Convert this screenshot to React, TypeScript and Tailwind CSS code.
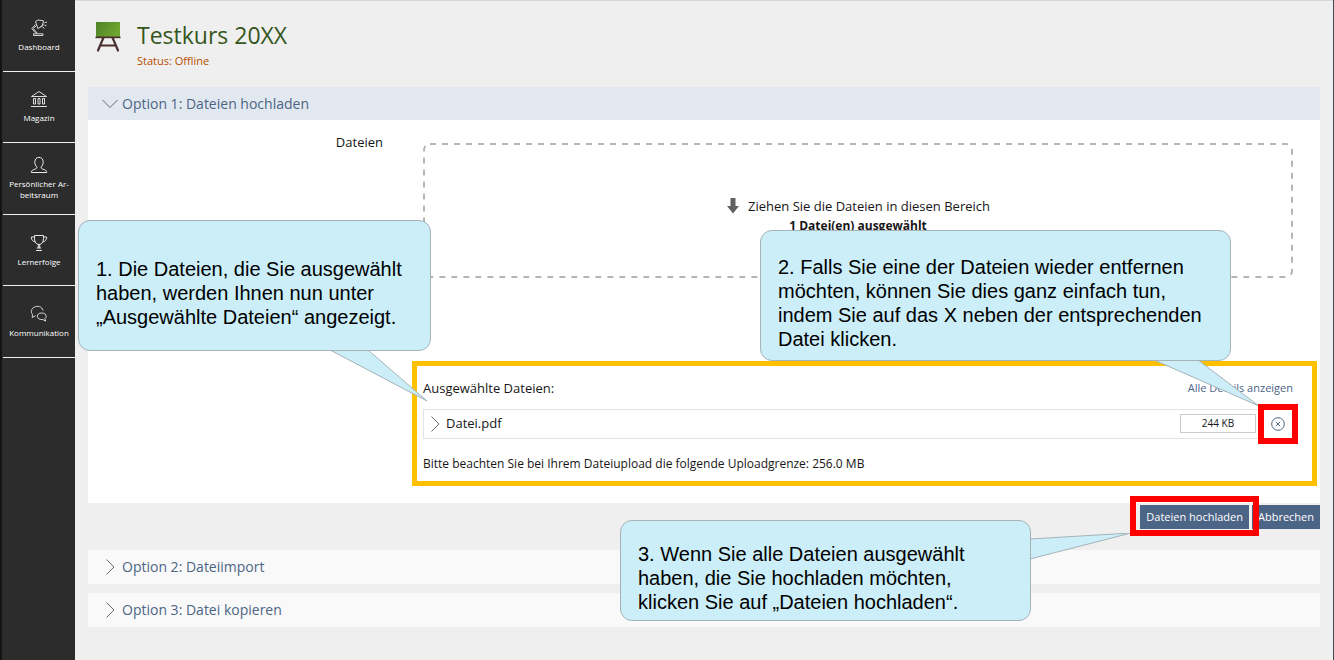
import type { ReactNode } from "react";

function LampIcon() {
  return (
    <svg viewBox="0 0 18 18" className="size-[18px]" fill="none" stroke="#e8e8e8" strokeWidth="0.9">
      <path d="M3.500 16.500h9.500v-1.700H3.500z" />
      <path d="M6 14.500 1.800 9.500 5.500 5.500M7.500 14.500 3.300 9.500 6.500 6.500" />
      <path d="M5.500 2.500 8 1l5.500.8-1 4.500-4.500 3.400z" />
      <path d="M12.800 4.800c.8 1.600-.3 3.200-2.400 3M14.500 3.800l2.500-.8M14.500 6l2 .8M13 8l1.200 1.700" />
    </svg>
  );
}

function MagazineIcon() {
  return (
    <svg viewBox="0 0 18 18" className="size-[18px]" fill="none" stroke="#f2f2f2" strokeWidth="0.9">
      <path d="M1.500 6.500 9 1.500l7.500 5zM1 16.500h16" />
      <path d="M3.500 8.500h2v5.500h-2zM8 8.500h2v5.500H8zM12.500 8.500h2v5.500h-2z" />
    </svg>
  );
}

function PersonIcon() {
  return (
    <svg viewBox="0 0 18 18" className="size-[18px]" fill="none" stroke="#e8e8e8" strokeWidth="1">
      <path d="M7 11c-1.300-1-2.200-2.800-2.200-5C4.800 3.200 6.500 1.300 9 1.300s4.200 1.900 4.200 4.700c0 2.200-.9 4-2.200 5 0 1.200.6 1.700 2 2.200 2.500.8 3.700 1.300 3.700 3.300H1.300c0-2 1.200-2.500 3.700-3.300 1.400-.5 2-1 2-2.200z" />
    </svg>
  );
}

function TrophyIcon() {
  return (
    <svg viewBox="0 0 18 18" className="size-[18px]" fill="none" stroke="#e8e8e8" strokeWidth="1">
      <path d="M4.500 1.500h9v3.200c0 3.300-1.800 5.800-4.500 5.800S4.500 8 4.500 4.700z" />
      <path d="M4.500 3H1.300c0 2.700 1.400 4.500 3.900 5M13.500 3h3.200c0 2.700-1.400 4.500-3.900 5" />
      <path d="M8.300 10.500v3.500M9.700 10.500v3.500M6.800 14h4.400M6 16.500h6" />
    </svg>
  );
}

function ChatIcon() {
  return (
    <svg viewBox="0 0 18 18" className="size-[18px]" fill="none" stroke="#e8e8e8" strokeWidth="0.9">
      <path d="M5.500 10.800 2.200 12.500l.3-3C.6 7.300 1 4 4 2.300c3.500-2 8.200-.8 9 3.200" />
      <path d="M11.700 8c2.700 0 4.500 1.300 4.500 3.200 0 1-.5 1.900-1.400 2.500l1 2.500-3-1.700c-3 .4-5.500-1-5.500-3.300C7.300 9.300 9 8 11.700 8z" />
    </svg>
  );
}

const navItems: { label: ReactNode; icon: ReactNode }[] = [
  { label: "Dashboard", icon: <LampIcon /> },
  { label: "Magazin", icon: <MagazineIcon /> },
  { label: <>Persönlicher Ar-<br />beitsraum</>, icon: <PersonIcon /> },
  { label: "Lernerfolge", icon: <TrophyIcon /> },
  { label: "Kommunikation", icon: <ChatIcon /> },
];

function Sidebar() {
  return (
    <nav className="w-[75px] shrink-0 border-l-2 border-[#141414] bg-[#2c2c2c] pl-px">
      <ul className="grid h-[358px] grid-rows-5">
        {navItems.map((item, i) => (
          <li key={i} className="border-b border-[#f0f0f0]">
            <a href="#" className="flex h-full flex-col items-center justify-center gap-1 text-center text-[8px] leading-[11px] whitespace-nowrap text-white">
              {item.icon}
              <span>{item.label}</span>
            </a>
          </li>
        ))}
      </ul>
    </nav>
  );
}

function BoardIcon() {
  return (
    <svg viewBox="0 0 26 30" className="h-[30px] w-[26px]">
      <defs>
        <linearGradient id="board" x1="0" y1="0" x2="1" y2="0.4">
          <stop offset="0" stopColor="#4f8128" />
          <stop offset="1" stopColor="#6ea62f" />
        </linearGradient>
      </defs>
      <path d="M8.500 15.500 3 28.500M17.500 15.500 23 28.500M6 23.500h14" stroke="#4a2f2c" strokeWidth="2.200" strokeLinecap="round" fill="none" />
      <path d="M1 0h24v15H1z" fill="url(#board)" />
      <path d="M0.500 14.500h25v1.700h-25z" fill="#4a2f2c" />
    </svg>
  );
}

function Chevron({ open = false }: { open?: boolean }) {
  return (
    <svg viewBox="0 0 16 16" className="size-4 shrink-0" fill="none" stroke="#6b6b6b" strokeWidth="1">
      <path d={open ? "M0.500 4 8 11.500 15.500 4" : "M4.500 .5 12 8 4.500 15.500"} />
    </svg>
  );
}

function OptionHeader({ label, open = false }: { label: string; open?: boolean }) {
  return (
    <button
      type="button"
      aria-expanded={open}
      className={
        open
          ? "flex h-[33px] w-full items-center gap-1 bg-[#e2e8ef] pl-[14px] text-sm text-[#4c6586]"
          : "flex h-[34px] w-full items-center gap-1 bg-[#f9f9f9] pl-[14px] text-sm text-[#4c6586]"
      }
    >
      <Chevron open={open} />
      {label}
    </button>
  );
}

function Bubble({ className, children }: { className: string; children: ReactNode }) {
  return (
    <div
      className={
        "absolute rounded-xl border border-[#a5b3b8] bg-[#cbeef8] px-[17px] font-['Liberation_Sans',Arial,sans-serif] text-xl leading-6 whitespace-nowrap text-black " +
        className
      }
    >
      {children}
    </div>
  );
}

function Tail({ className, viewBox, d }: { className: string; viewBox: string; d: string }) {
  return (
    <svg aria-hidden="true" viewBox={viewBox} className={"absolute " + className} fill="#cbeef8" stroke="#a5b3b8" strokeWidth="1">
      <path d={d} />
    </svg>
  );
}

function DropZone() {
  return (
    <div className="relative mr-[27px] ml-[11px] flex h-[135px] flex-col items-center pt-[53px] text-[13px] leading-5">
      <svg aria-hidden="true" className="absolute inset-px h-[calc(100%-2px)] w-[calc(100%-2px)] overflow-visible">
        <rect width="100%" height="100%" rx="6" fill="none" stroke="#b5b5b5" strokeWidth="2" strokeDasharray="6 6" />
      </svg>
      <div className="flex items-center gap-2">
        <svg viewBox="0 0 14 16" className="h-4 w-[14px]" fill="#606060">
          <path d="M4.500 0h5v8H13L7 15.500 1 8h3.500z" />
        </svg>
        Ziehen Sie die Dateien in diesen Bereich
      </div>
      <strong className="text-xs leading-5">1 Datei(en) ausgewählt</strong>
    </div>
  );
}

function SelectedFiles() {
  return (
    <section className="relative mt-[83px] mr-[3px] border-[5px] border-[#ffc000] pr-[19px] pb-[7px] pl-[6px]">
      <div className="flex items-center justify-between pt-3 text-[13px] leading-5">
        <h2>Ausgewählte Dateien:</h2>
        <a href="#" className="text-[11px] text-[#4c6586]">Alle Details anzeigen</a>
      </div>
      <div className="mt-[11px] flex h-[30px] items-center border border-[#e4e4e4] pl-[3px] text-[13px]">
        <button type="button" className="flex flex-1 items-center gap-[3px]">
          <Chevron />
          Datei.pdf
        </button>
        <span className="mb-[2px] flex h-[19px] w-[76px] items-center justify-center border border-[#cccccc] text-[10px]">244 KB</span>
        <div className="flex w-9 justify-center pl-[7px]">
          <button type="button" aria-label="Datei entfernen">
            <svg viewBox="0 0 14 14" className="size-[14px]" fill="none" stroke="#4c6586" strokeWidth="1">
              <circle cx="7" cy="7" r="6.300" />
              <path d="M4.800 4.800l4.400 4.400M9.200 4.800 4.800 9.200" />
            </svg>
          </button>
        </div>
      </div>
      <p className="mt-[15px] text-xs leading-5">
        Bitte beachten Sie bei Ihrem Dateiupload die folgende Uploadgrenze: 256.0 MB
      </p>

      <Tail className="-top-4 -left-[87px] h-[52px] w-[98px]" viewBox="0 0 98 52" d="M0 0 97 51 38 0z" />
      <Bubble className="-top-[146px] -left-[339px] h-[131px] w-[353px] pt-9">
        1. Die Dateien, die Sie ausgewählt
        <br />
        haben, werden Ihnen nun unter
        <br />
        „Ausgewählte Dateien“ angezeigt.
      </Bubble>
      <Tail className="-top-[6px] right-[52px] h-[47px] w-[106px]" viewBox="0 0 106 47" d="M0 0 105 46 44 0z" />
      <Bubble className="-top-[136px] right-[81px] h-[131px] w-[471px] pt-6">
        2. Falls Sie eine der Dateien wieder entfernen
        <br />
        möchten, können Sie dies ganz einfach tun,
        <br />
        indem Sie auf das X neben der entsprechenden
        <br />
        Datei klicken.
      </Bubble>
      <div className="pointer-events-none absolute top-[38px] right-[14px] h-10 w-10 border-[6px] border-[#ff0000]" />
    </section>
  );
}

function Actions() {
  return (
    <div className="relative mt-[2px] flex h-6 justify-end gap-[3px] text-[11px] text-white">
      <button type="button" className="bg-[#4c6586] px-[6px]">Dateien hochladen</button>
      <button type="button" className="bg-[#4c6586] px-[6px]">Abbrechen</button>
      <Tail className="top-7 right-[188px] h-[27px] w-[102px]" viewBox="0 0 102 27" d="M0 6 101 0 0 26z" />
      <div className="pointer-events-none absolute -top-[9px] right-[61px] h-10 w-[129px] border-[6px] border-[#ff0000]" />
      <Bubble className="top-[15px] right-[289px] h-[101px] w-[411px] pt-[21px]">
        3. Wenn Sie alle Dateien ausgewählt
        <br />
        haben, die Sie hochladen möchten,
        <br />
        klicken Sie auf „Dateien hochladen“.
      </Bubble>
    </div>
  );
}

export default function App() {
  return (
    <div className="flex min-h-screen border-r border-[#3f4a55] bg-[#efefef] font-['Open_Sans','Noto_Sans',sans-serif] text-[#161616]">
      <Sidebar />
      <main className="min-w-0 flex-1 border-t border-[#d8d8d8] pr-[13px] pl-[13px]">
        <header className="flex h-[86px] gap-4 pt-[21px] pl-[7px]">
          <BoardIcon />
          <div>
            <h1 className="text-[23px] leading-[26px] text-[#35561c]">Testkurs 20XX</h1>
            <p className="mt-[5px] text-[11px] leading-4 text-[#b54f00]">Status: Offline</p>
          </div>
        </header>
        <OptionHeader label="Option 1: Dateien hochladen" open />
        <div className="flex bg-white pt-[23px] pb-[17px]">
          <div className="-mt-[11px] w-[295px] shrink-0 text-right text-[13px] leading-5">Dateien</div>
          <div className="ml-[29px] min-w-0 flex-1">
            <DropZone />
            <SelectedFiles />
          </div>
        </div>
        <Actions />
        <div className="mt-[21px] flex flex-col gap-[9px]">
          <OptionHeader label="Option 2: Dateiimport" />
          <OptionHeader label="Option 3: Datei kopieren" />
        </div>
      </main>
    </div>
  );
}
